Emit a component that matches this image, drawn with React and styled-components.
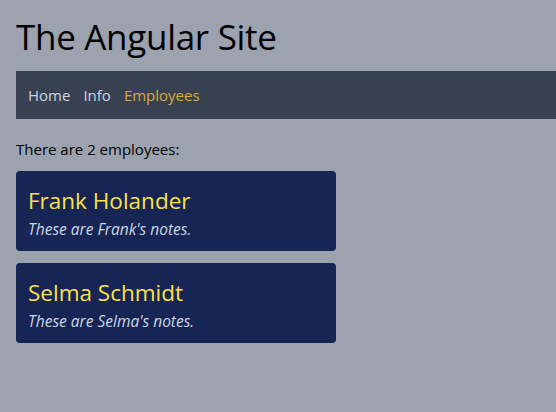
import React from "react"
import styled, { createGlobalStyle } from "styled-components"

const GlobalStyle = createGlobalStyle`
    html, body {
        margin: 0;
        background: #9ca3af;
        font-family: "Open Sans", "Noto Sans", sans-serif;
        color: #000;
    }
`

const employees = [
    { name: "Frank Holander", notes: "These are Frank's notes." },
    { name: "Selma Schmidt", notes: "These are Selma's notes." },
]

const App = () => {
    return (
        <>
            <GlobalStyle />
            <Page>
                <Title>The Angular Site</Title>
                <Nav>
                    <NavLink>Home</NavLink>
                    <NavLink>Info</NavLink>
                    <NavLink active>Employees</NavLink>
                </Nav>
                <Content>
                    <Summary>There are {employees.length} employees:</Summary>
                    {employees.map(e => (
                        <Card key={e.name}>
                            <Name>{e.name}</Name>
                            <Notes>{e.notes}</Notes>
                        </Card>
                    ))}
                </Content>
            </Page>
        </>
    )
}

export default App

const Page = styled.div`
    padding: 16px 0 16px 16px;
`

const Title = styled.h1`
    margin: 0 0 13px;
    font-size: 35px;
    font-weight: 400;
    line-height: 42px;
    letter-spacing: -0.3px;
`

const Nav = styled.nav`
    background: #374151;
    height: 48px;
    display: flex;
    align-items: center;
    gap: 13px;
    padding: 0 12px;
`

const NavLink = styled.a`
    font-size: 15px;
    color: ${props => props.active ? "#d9a93c" : "#cbd5e1"};
    cursor: pointer;
`

const Content = styled.div`
    padding-top: 20px;
    display: flex;
    flex-direction: column;
    align-items: flex-start;
    gap: 12px;
`

const Summary = styled.div`
    font-size: 15px;
    margin-bottom: 0;
`

const Card = styled.div`
    width: 320px;
    height: 80px;
    box-sizing: border-box;
    background: #172554;
    border-radius: 4px;
    padding: 15px 12px;
`

const Name = styled.div`
    color: #fde047;
    font-size: 22.5px;
    line-height: 30px;
    margin-bottom: 3px;
`

const Notes = styled.div`
    color: #cbd5e1;
    font-size: 15.5px;
    line-height: 20px;
    font-style: italic;
`
